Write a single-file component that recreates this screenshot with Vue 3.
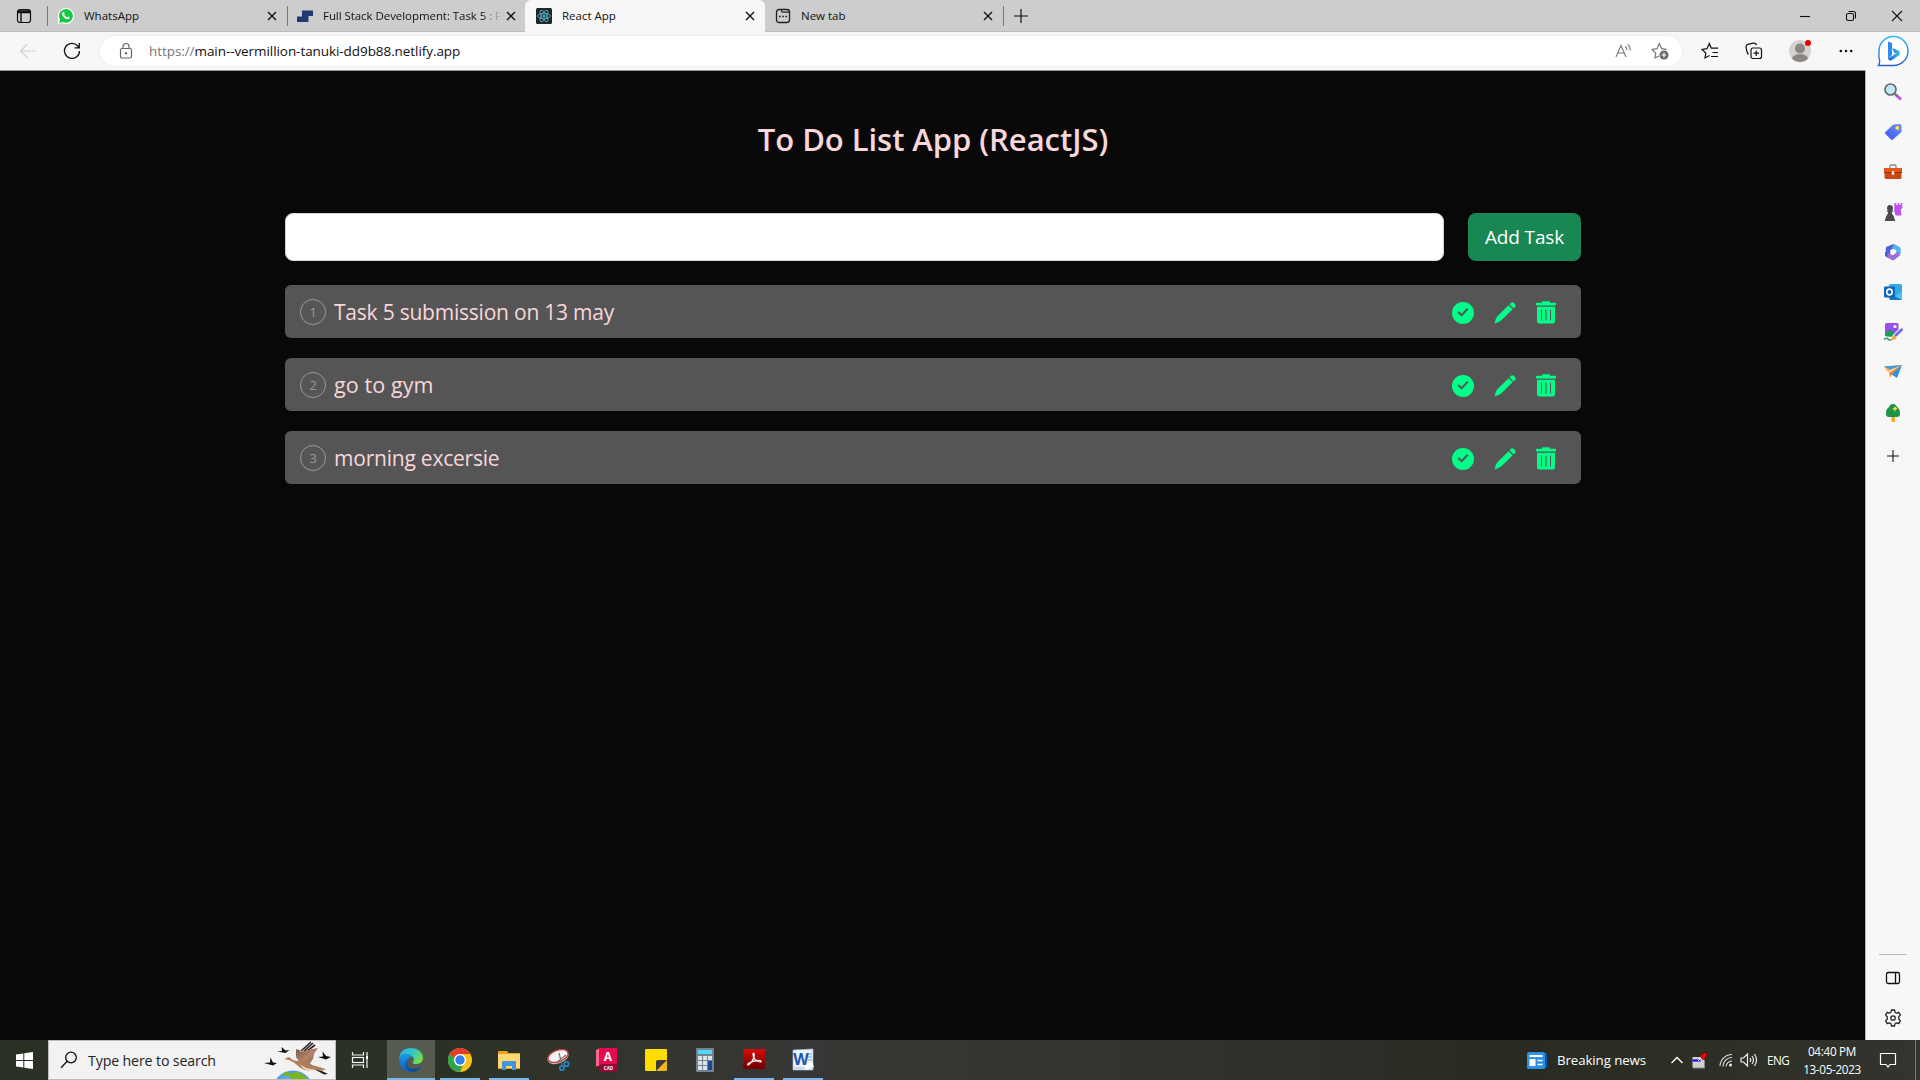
<script setup>
import { ref } from 'vue'
const tasks = ref(['Task 5 submission on 13 may', 'go to gym', 'morning excersie'])
const draft = ref('')
</script>

<template>
  <div class="screen">
    <header class="tabbar">
      <div class="workspace"><svg width="16" height="16" viewBox="0 0 16 16" fill="none" stroke="#111"><rect x="1.5" y="1.5" width="13" height="13" rx="2.5" stroke-width="1.2"/><path d="M2 3h12M5 4.500v10M2 4.500h12" stroke-width="1.4"/></svg></div>
      <div class="tab first">
        <svg class="fav" viewBox="0 0 16 16"><path d="M0 16V8a8 8 0 1 1 8 8 8 8 0 0 1-3.600-.9z" fill="#fff"/><path d="M1 15l1-3.600A6.900 6.900 0 1 1 4.700 14z" fill="#17c643"/><path d="M5 4.300c.5-.5 1-.4 1.200.1l.5 1.200c.1.400-.5.900-.5 1.200.6 1.200 1.500 2 2.800 2.500.4 0 .8-.9 1.200-.8l1.400.7c.5.300-.1 1.900-1.500 2-2.700.1-6.500-3.300-6-5.700.1-.5.500-.9.900-1.200z" fill="#fff"/></svg>
        <span class="t name">WhatsApp</span>
        <svg class="x" viewBox="0 0 10 10"><path d="M1 1l8 8M9 1L1 9"/></svg>
      </div>
      <div class="tab second">
        <svg class="fav" viewBox="0 0 16 16"><path d="M5 2.500h11v5.500h-4.500v6H0V8.500h5z" fill="#233a70"/></svg>
        <span class="t name faded">Full Stack Development: Task 5 : F</span>
        <svg class="x" viewBox="0 0 10 10"><path d="M1 1l8 8M9 1L1 9"/></svg>
      </div>
      <div class="tab active">
        <svg class="fav" viewBox="0 0 16 16"><rect width="16" height="16" rx="1.500" fill="#20232a"/><g fill="none" stroke="#58c4dc" stroke-width=".8"><ellipse cx="8" cy="8" rx="6.500" ry="2.500"/><ellipse cx="8" cy="8" rx="6.500" ry="2.500" transform="rotate(60 8 8)"/><ellipse cx="8" cy="8" rx="6.500" ry="2.500" transform="rotate(120 8 8)"/></g><circle cx="8" cy="8" r="1.200" fill="#58c4dc"/></svg>
        <span class="t name">React App</span>
        <svg class="x" viewBox="0 0 10 10"><path d="M1 1l8 8M9 1L1 9"/></svg>
      </div>
      <div class="tab last">
        <svg class="fav" viewBox="0 0 16 16" fill="none" stroke="#222" stroke-width="1.300"><rect x="1.500" y="1.500" width="13" height="13" rx="2.500"/><path d="M6.500 1.500v1.200q0 1.500 1.500 1.500h6.300"/><path d="M4 8.500h1.600M7.200 8.500h1.600M10.400 8.500h1.600" stroke-width="1.600"/></svg>
        <span class="t name">New tab</span>
        <svg class="x" viewBox="0 0 10 10"><path d="M1 1l8 8M9 1L1 9"/></svg>
      </div>
      <svg class="plus" width="14" height="14" viewBox="0 0 14 14"><path d="M7 0v14M0 7h14" stroke="#111" stroke-width="1.200"/></svg>
      <div class="winctl">
        <svg width="12" height="12" viewBox="0 0 12 12"><path d="M1 6.500h10" /></svg>
        <svg width="12" height="12" viewBox="0 0 12 12"><rect x="1.500" y="3.500" width="7" height="7" rx="1.500"/><path d="M3.500 1.500h5q2 0 2 2v5"/></svg>
        <svg width="12" height="12" viewBox="0 0 12 12"><path d="M1 1l10 10M11 1L1 11"/></svg>
      </div>
    </header>

    <div class="toolbar">
      <svg class="back" width="18" height="18" viewBox="0 0 18 18" fill="none" stroke="#cfcfcf" stroke-width="1.100"><path d="M17 9H1.500M8.500 2l-7 7 7 7"/></svg>
      <svg class="reload" width="18" height="18" viewBox="0 0 18 18" fill="none" stroke="#111" stroke-width="1.300"><path d="M16.500 9A7.500 7.500 0 1 1 14.500 3.800L16 5.500M16.300 1v4.800h-4.800"/></svg>
      <div class="address">
        <svg class="lock" width="14" height="18" viewBox="0 0 14 18" fill="none" stroke="#666" stroke-width="1.200"><rect x="1.500" y="6.500" width="11" height="9.500" rx="1.800"/><path d="M4 6.500V4.500a3 3 0 0 1 6 0v2"/><circle cx="7" cy="11.300" r=".6" fill="#666"/></svg>
        <span class="t url"><i>https://</i>main--vermillion-tanuki-dd9b88.netlify.app</span>
        <svg class="aloud" width="17" height="16" viewBox="0 0 17 16" fill="none" stroke="#777" stroke-width="1.100"><path d="M1 14L6 2.500 11 14M2.800 10h6.400M10 3.500q2 1 2 3.500M12.500 1.500q3 2 2.700 6"/></svg>
        <svg class="star" width="18" height="18" viewBox="0 0 18 18" fill="none" stroke="#777" stroke-width="1.200"><path d="M8 14L4 16l.7-5L1 7.400l5-.7L8.300 1.500l2.300 5.200 5 .7"/><circle cx="13" cy="13" r="4.500" fill="#666" stroke="none"/><path d="M13 10.500v5M10.500 13h5" stroke="#fff"/></svg>
      </div>
      <div class="actions">
        <svg width="18" height="18" viewBox="0 0 18 18" fill="none" stroke="#111" stroke-width="1.200"><path d="M8.500 13.500L4 16l.8-5L1 7.400l5-.7L8.300 1.500l2 4.700h6.700M11.500 10.500H17M10 14.500h7"/></svg>
        <svg width="18" height="18" viewBox="0 0 18 18" fill="none" stroke="#111" stroke-width="1.200"><rect x="6" y="6" width="10.500" height="10.500" rx="2"/><path d="M11.200 8.500v5.500M8.500 11.200h5.500M3.500 12.500Q2.500 11.500 2 9.500L1 5.500Q.8 3 3 2.300L8 1.100q2.500-.4 3.700 2"/></svg>
        <svg width="24" height="24" viewBox="0 0 24 24"><clipPath id="av"><circle cx="12" cy="12" r="11"/></clipPath><circle cx="12" cy="12" r="11" fill="#d5d3d0"/><g clip-path="url(#av)" fill="#8b8784"><circle cx="12" cy="9.500" r="5"/><ellipse cx="12" cy="20" rx="8" ry="5"/></g><circle cx="20" cy="4" r="3" fill="#e60000"/></svg>
        <svg width="14" height="4" viewBox="0 0 14 4" fill="#111"><circle cx="1.800" cy="2" r="1.300"/><circle cx="7" cy="2" r="1.300"/><circle cx="12.200" cy="2" r="1.300"/></svg>
        <svg width="32" height="32" viewBox="0 0 32 32"><defs><linearGradient id="bo" x1="0" y1="0" x2="0" y2="1"><stop stop-color="#2bb8f4"/><stop offset="1" stop-color="#2560d8"/></linearGradient><linearGradient id="bi" x1="0" y1="0" x2="1" y2="0"><stop stop-color="#1c55d8"/><stop offset="1" stop-color="#38c8f0"/></linearGradient></defs><path d="M1.500 30.500q2-3 .5-8V16a14.500 14.500 0 1 1 14.500 14.500z" fill="#fff" stroke="url(#bo)" stroke-width="1.400"/><path d="M11 6.500l4 1.500v12l-4 3.500z" fill="#2a8cf2"/><path d="M11 23.500l8-5-2-1-1.800-4.500 6.300 2.500q3 2.500.3 5L15 25q-3 1.500-4-1.500z" fill="url(#bi)"/></svg>
      </div>
    </div>

    <div class="middle">
      <main class="page">
        <h1><span class="t">To Do List App (ReactJS)</span></h1>
        <div class="entry">
          <input v-model="draft" type="text">
          <button type="button"><span class="t">Add Task</span></button>
        </div>
        <div v-for="(task, i) in tasks" :key="task" class="row">
          <span class="num">{{ i + 1 }}</span>
          <span class="t task">{{ task }}</span>
          <div class="ops">
            <svg width="22" height="22" viewBox="0 0 16 16" fill="#0f8"><path d="M16 8A8 8 0 1 1 0 8a8 8 0 0 1 16 0m-4.500-2.200a.7.7 0 0 0-1-1L7 8.600 5.400 7.100a.7.7 0 0 0-1 1l2.100 2.100a.7.7 0 0 0 1 0z"/></svg>
            <svg width="22" height="22" viewBox="0 0 23 23" fill="#0f8"><path d="M16.200 2.300l1.600-1.600q1.600-1.200 3.600.8t.8 3.600l-1.800 1.700zM15.200 3.300l4.300 4.400L7.800 19.200Q5.500 21.300.6 22.400 1.400 17.400 3.500 15z"/></svg>
            <svg width="20" height="23" viewBox="0 0 20 23"><path d="M6 2V1q0-.8 1-.8h6q1 0 1 .8v1z" fill="#0f8"/><rect y="1.700" width="20" height="2.900" rx="1" fill="#0f8"/><path d="M1 5.800h18V20q0 2.500-2.500 2.500h-13Q1 22.500 1 20z" fill="#0f8"/><path d="M5.500 8.700v10.800M10 8.700v10.800M14.500 8.700v10.800" stroke="#555" stroke-width="1"/></svg>
          </div>
        </div>
      </main>
      <aside class="side">
        <svg viewBox="0 0 20 20"><path d="M12.500 12.500l5.500 5" stroke="#c44ef0" stroke-width="3"/><path d="M11 11l3 3" stroke="#777" stroke-width="2"/><circle cx="7.500" cy="7.500" r="5.500" fill="#bfe6fb" stroke="#666" stroke-width="1.600"/></svg>
        <svg viewBox="0 0 20 20"><defs><linearGradient id="tg" x1="0" y1="1" x2="1" y2="0"><stop stop-color="#3657f0"/><stop offset="1" stop-color="#6d92ff"/></linearGradient></defs><path d="M10.500 2.500l6-.5q2 0 2 2v6L10 17.500q-1 .8-2 0L2.500 12q-1-1-.2-2z" fill="url(#tg)"/><circle cx="14.300" cy="6" r="1.500" fill="#fff" stroke="#f7c52b" stroke-width="1.300"/></svg>
        <svg viewBox="0 0 20 20"><path d="M7 6V4q0-1 1-1h4q1 0 1 1v2" fill="none" stroke="#888" stroke-width="1.300"/><rect x="1.500" y="6" width="17" height="11" rx="1.500" fill="#c94a15"/><path d="M1 6h18v4H1z" fill="#e2571c"/><path d="M1 10h18v1H1z" fill="#96330d"/><rect x="8.700" y="9" width="2.600" height="4" rx="1" fill="#ddd"/></svg>
        <svg viewBox="0 0 20 20"><path d="M11.500 1h1.800v2h1.400V1h1.800v2h1.300V1h1.500v5l-1.500 1.500.8 6h-6l-1.500-5z" fill="#bd52f2"/><path d="M7 3a3 3 0 0 1 2 5.300h1v1.400H8.700q0 3 2.300 4.800v2h.9V19H2v-2.500h.9v-2q2.300-1.800 2.300-4.800H4V8.300h1A3 3 0 0 1 7 3z" fill="#4b4b4b"/></svg>
        <svg viewBox="0 0 20 20" fill="none" stroke-width="4.500" stroke-linejoin="round"><path d="M11.500 4L5 6.500v6" stroke="#4a62d8"/><path d="M10 4l5.500 3v5" stroke="#58b4ea"/><path d="M16 11.500l-6 4.500-5.500-3" stroke="#9a6fd6"/><path d="M3 10.500v2.500l1.500 1.500" stroke="#3f57c8" stroke-width="2"/></svg>
        <svg viewBox="0 0 20 20"><rect x="6" y="2" width="13" height="16" rx="1.500" fill="#33a9e8"/><path d="M6 11l13 7H7.500z" fill="#1672c4"/><path d="M19 10l-8 4 8 4z" fill="#46c5f2"/><rect x="1" y="4.500" width="11" height="11" rx="1" fill="#0b67b8"/><ellipse cx="6.500" cy="10" rx="2.700" ry="2.900" fill="none" stroke="#fff" stroke-width="1.600"/></svg>
        <svg viewBox="0 0 20 20"><rect x="2" y="1" width="13.500" height="13" rx="1.500" fill="#9a4ef0"/><path d="M2 12.500Q8 3 13 13.500q-5 2-11 .5z" fill="#1f9a5d"/><circle cx="12" cy="4.500" r="1.600" fill="#fff"/><path d="M1 17.500q3-2.500 4-.5t4 .5" fill="none" stroke="#238653" stroke-width="1.300"/><path d="M11 15l8.500-8" stroke="#f7f7f7" stroke-width="4.500"/><path d="M12 14l7.500-7" stroke="#6d62f5" stroke-width="2.600"/><path d="M8.500 18q0-4 3-4.500l2 2q-1 3-5 2.500z" fill="#f9a825"/></svg>
        <svg viewBox="0 0 20 20"><path d="M1 4.500L19 3 5 10z" fill="#ffb33b"/><path d="M1 4.500L19 3 7 7.500z" fill="#349ceb"/><path d="M19 3l-5 13-8-5z" fill="#2d90e8"/><path d="M6 11L19 3 8.500 12.500 7.500 16z" fill="#f58b1b"/></svg>
        <svg viewBox="0 0 20 20"><rect x="8.500" y="12" width="3.500" height="7" rx="1" fill="#f5a623"/><path d="M10 1q3 0 4 3 3 2 3 6 .3 4-3 4H6q-3.300 0-3-4 0-4 3-6 1-3 4-3z" fill="#1e9448"/><path d="M12 3l1 1.700 1.700 1-1.700 1-1 1.700-1-1.700-1.700-1 1.700-1z" fill="#ffd23c"/></svg>
        <svg class="add" viewBox="0 0 20 20"><path d="M10 4v12M4 10h12" stroke="#111" stroke-width="1.100"/></svg>
        <hr>
        <svg class="panel" viewBox="0 0 20 20" fill="none" stroke="#111" stroke-width="1.300"><rect x="3.500" y="4.500" width="13" height="11" rx="1.800"/><path d="M12.500 4.500v11"/></svg>
        <svg class="gear" viewBox="0 0 20 20" fill="none" stroke="#222" stroke-width="1.300"><path d="M8.500 2h3l.5 2.200 1.700 1 2.100-.8 1.600 2.700-1.600 1.700v2.400l1.600 1.700-1.600 2.700-2.100-.8-1.700 1-.5 2.200h-3L8 15.800l-1.700-1-2.100.8-1.600-2.700 1.600-1.700V8.800L2.600 7.100l1.600-2.700 2.100.8 1.700-1z" stroke-linejoin="round"/><circle cx="10" cy="10" r="2.200"/></svg>
      </aside>
    </div>

    <footer class="taskbar">
      <div class="start"><svg width="17" height="17" viewBox="0 0 17 17" fill="#fff"><path d="M0 2.400l7.300-1V8H0zM8.300 1.200L17 0v8H8.300zM0 9h7.300v6.600L0 14.600zM8.300 9H17v8l-8.700-1.200z"/></svg></div>
      <div class="search">
        <svg class="mag" width="18" height="18" viewBox="0 0 18 18" fill="none" stroke="#111" stroke-width="1.300"><circle cx="11" cy="6.500" r="5.300"/><path d="M7.200 10.300L1 16.700"/></svg>
        <span class="t stext">Type here to search</span>
        <svg class="goose" width="70" height="38" viewBox="0 0 70 38">
          <defs><linearGradient id="gb" x1="0" y1="0" x2="1" y2="1"><stop stop-color="#7d5748"/><stop offset=".5" stop-color="#b38468"/><stop offset="1" stop-color="#7a5140"/></linearGradient><radialGradient id="gl"><stop stop-color="#9fd8f5"/><stop offset="1" stop-color="#4a9ae6"/></radialGradient></defs>
          <circle cx="29" cy="50" r="20.500" fill="url(#gl)"/><path d="M20 32q2-2 5-1 1 2 3 2 1-2 4-2 7 1 12 7H27q-1-4-7-3z" fill="#7ab51f"/>
          <path d="M37 10L47 1M40 10l9-8M43 10l8-6M34 9l3 4" stroke="#2b211f" stroke-width="1.600" fill="none"/>
          <path d="M32 8l5 3 6-2 11-2-4 6-1 5-6 8-7-4-4-6z" fill="url(#gb)"/>
          <path d="M21 18q2-2.500 5-1.500 2 3 7 3.500 9-1 15 4l9 2.500 5 2-4 1-7-1q-9 3-15-2l-6-5-5-2.500z" fill="#b07d5c"/>
          <path d="M36 23q6 6 15 5l-2 1.500q-9 2-13-6.500z" fill="#ead8c4"/>
          <path d="M50 28l8 2 6 3-4 .5z" fill="#2b211f"/><path d="M20.500 18.500l3.500-2v2z" fill="#e7862e"/>
          <path d="M0 22l6-.5.500-5 2.500 5 4 .5-4 2.500zM13 10.500l5-.5-.5-4 4 3.500 4-.5-4 3zM54 16l5-.5-.5-5 3.500 4.500 5 1-5 2.500z" fill="#111"/>
        </svg>
      </div>
      <div class="taskview"><svg width="18" height="18" viewBox="0 0 18 18" fill="none" stroke="#f5f5f5" stroke-width="1.200"><path d="M1.500 1v3h11V1M1.500 17v-3h11v3"/><rect x="1.500" y="6.500" width="11" height="5"/><path d="M16 1v16"/><rect x="15" y="5" width="2" height="3" fill="#fff" stroke="none"/></svg></div>
      <div class="apps">
        <div class="app on"><svg width="24" height="24" viewBox="0 0 24 24"><defs><linearGradient id="e1" x1="0" y1="0" x2="1" y2=".6"><stop stop-color="#2db0e8"/><stop offset=".5" stop-color="#35c3c8"/><stop offset="1" stop-color="#6fe04d"/></linearGradient><linearGradient id="e2" x1="0" y1="0" x2="0" y2="1"><stop stop-color="#1a9be0"/><stop offset="1" stop-color="#0b5fbe"/></linearGradient></defs><path d="M0 11Q1 0 12 0q11 .5 12 9.500 0 6-6.500 6.500-4 .2-3.800-1.500 2-2 .6-5Q11 5.500 6 6.500 2 7.500 0 11z" fill="url(#e1)"/><path d="M0 12q0-6 6.500-6.200Q13 6 14.300 9.500 8.500 8.500 8 14q0 6 6 8.500l-2 1.500Q1 23 0 12z" fill="url(#e2)"/><path d="M9 10.500q-4 9 5 10.500 5 .5 8.500-3-2 5.500-8.500 6Q6 23 6.500 15 7 12 9 10.500z" fill="#0c4f9c"/></svg></div>
        <div class="app run"><svg width="24" height="24" viewBox="0 0 24 24"><circle cx="12" cy="12" r="12" fill="#fbc116"/><path d="M1.600 6L6.800 15a6 6 0 0 0 5.200 3h2.600L12 24A12 12 0 0 1 1.600 6z" fill="#2da44e"/><path d="M1.600 6l5.200 9L9 12 7 9z" fill="#2da44e"/><path d="M1.600 6A12 12 0 0 1 22.400 6H12Q8 6 6.500 9.700z" fill="#e33b2e"/><circle cx="12" cy="12" r="6" fill="#fff"/><circle cx="12" cy="12" r="4.700" fill="#317ef0"/></svg></div>
        <div class="app run"><svg width="24" height="24" viewBox="0 0 24 24"><path d="M1 3h9l1.500 2H23v16H1z" fill="#e6a519"/><path d="M1 6h22v14H1z" fill="#ffd874"/><path d="M5 14q0-1 1-1h12q1 0 1 1v8h-4v-4H9v4H5z" fill="#3f96d8"/></svg></div>
        <div class="app"><svg width="24" height="24" viewBox="0 0 24 24"><ellipse cx="12" cy="9" rx="11" ry="6.500" transform="rotate(-20 12 9)" fill="#b9bbbd"/><ellipse cx="12" cy="8" rx="10.500" ry="5.700" transform="rotate(-20 12 8)" fill="#f4f4f4" stroke="#d13a3a" stroke-width="1.300"/><path d="M13 5l3 12M20 7l-9 7" stroke="#777" stroke-width="1.200"/><g fill="none" stroke="#2584c6" stroke-width="1.800"><circle cx="16" cy="20" r="2.200"/><circle cx="20.500" cy="16" r="2.200"/></g></svg></div>
        <div class="app"><svg width="24" height="24" viewBox="0 0 24 24"><path d="M1 2l4-2v17l-4 2z" fill="#f56a8c"/><rect x="4" width="18" height="18" fill="#e5094d"/><path d="M1 18h3l2-2h17v8H6z" fill="#8e0b36"/><text x="13" y="13" text-anchor="middle" font-size="12" font-weight="700" fill="#fff">A</text><text x="13.500" y="22" text-anchor="middle" font-size="4.500" font-weight="700" fill="#fff">CAD</text></svg></div>
        <div class="app"><svg width="24" height="24" viewBox="0 0 24 24"><path d="M1 2q0-1 1-1h20q1 0 1 1v10L12 23H2q-1 0-1-1z" fill="#ffdd00"/><path d="M12 23V12h11v10q0 1-1 1z" fill="#f3b51a"/><path d="M12 23v-9q0-2 2-2h9z" fill="#3b3b38"/></svg></div>
        <div class="app"><svg width="24" height="24" viewBox="0 0 24 24"><rect x="3" width="18" height="24" rx="1" fill="#75838f"/><rect x="5" y="2" width="14" height="4" fill="#50dcf8"/><g fill="#dfe4e8"><rect x="5" y="8" width="4" height="4"/><rect x="10" y="8" width="4" height="4"/><rect x="15" y="8" width="4" height="4"/><rect x="5" y="13" width="4" height="4"/><rect x="10" y="13" width="4" height="4"/><rect x="5" y="18" width="4" height="4"/><rect x="10" y="18" width="4" height="4"/></g><rect x="15" y="13" width="4" height="9" fill="#124d91"/></svg></div>
        <div class="app run"><svg width="24" height="24" viewBox="0 0 24 24"><defs><linearGradient id="ac" x1="0" y1="0" x2="0" y2="1"><stop stop-color="#d60b0b"/><stop offset="1" stop-color="#6d0000"/></linearGradient></defs><rect x="1" y="1" width="22" height="20" fill="url(#ac)"/><path d="M6 17q4-2 6-8 .5-4-.5-4t0 4q2 4.500 7 5 1.500-.5-.5-1.500-5-.5-11 2.500-2 1.500-1 2z" fill="none" stroke="#fff" stroke-width="1.200"/></svg></div>
        <div class="app run"><svg width="24" height="24" viewBox="0 0 24 24"><path d="M2 2l20-1v21H2z" fill="#eef3fa" stroke="#9fb9de" stroke-width=".7"/><path d="M2 19h20v3H2z" fill="#c9d8ee"/><path d="M16 6h5M16 9h5M17 12h4" stroke="#7fa3d4"/><path d="M13 17l8-3 2 5-8 3z" fill="#fff"/><text x="10" y="16.500" text-anchor="middle" font-size="16" font-weight="700" fill="#2057a8">W</text></svg></div>
      </div>
      <div class="tray">
        <svg class="news" width="20" height="17" viewBox="0 0 20 17"><rect x="2" y="1" width="18" height="15" rx="1.500" fill="#0d5aa7"/><rect width="18" height="17" rx="1.500" fill="#2a8fe6"/><path d="M2.500 4h13" stroke="#fff" stroke-width="2.200"/><path d="M2.500 7h6v7h-6z" fill="#fff"/><path d="M10.500 8.500h5M10.500 12.500h5" stroke="#fff" stroke-width="1.700"/></svg>
        <span class="t newst">Breaking news</span>
        <svg class="chev" width="12" height="8" viewBox="0 0 12 8" fill="none" stroke="#fff" stroke-width="1.300"><path d="M.5 7L6 1.500 11.500 7"/></svg>
        <svg class="pin" width="16" height="17" viewBox="0 0 16 17"><path d="M1 5h12v11.500H1z" fill="#888"/><path d="M.5 5H12v10.500H.5z" fill="#cfcfcf"/><path d="M.5 7.500h8v2h-8z" fill="#00f"/><path d="M6 9l3-3" stroke="#fff"/><path d="M8 3l2.500-.5L11.500.5h3L15 3l-2 2.500L12.500 8 10 7z" fill="#f00" stroke="#300" stroke-width=".5"/></svg>
        <svg class="wifi" width="14" height="14" viewBox="0 0 14 14" fill="none" stroke="#ddd" stroke-width="1.100"><path d="M1 13A12 12 0 0 1 13 1.500"/><path d="M4 13.500A9 9 0 0 1 13 4.500"/><path d="M7 13.500a6.500 6.500 0 0 1 6-5.500"/><circle cx="11.500" cy="12" r="1.500" fill="#eee" stroke="none"/></svg>
        <svg class="vol" width="18" height="14" viewBox="0 0 18 14" fill="none" stroke="#eee" stroke-width="1.200"><path d="M1 5h2.500L7.500 1v12l-4-4H1zM10 5q1.500 2 0 4M12 3q3 4 0 8M14.500 1q4 6 0 12"/></svg>
        <span class="t eng">ENG</span>
        <div class="clock"><span class="t time">04:40 PM</span><span class="t date">13-05-2023</span></div>
        <svg class="note" width="18" height="17" viewBox="0 0 18 17" fill="none" stroke="#fff" stroke-width="1.200"><path d="M1.500 1.500h15v11H11l-2 2.500-2-2.500H1.500z"/></svg>
        <i class="peek"></i>
      </div>
    </footer>
  </div>
</template>

<style>
html, body { margin: 0; overflow: hidden; }
</style>

<style scoped>
.screen { width: 1920px; height: 1080px; display: flex; flex-direction: column; font-family: "Open Sans", "Noto Sans", sans-serif; overflow: hidden; background: #f7f7f7; }
svg { display: block; flex: none; }
.t { white-space: nowrap; }
.tabbar { height: 32px; flex: none; display: flex; align-items: center; background: #cdcdcd; box-shadow: inset 0 -1px #bdbdbd; }
.workspace { width: 47px; padding-left: 16px; box-sizing: border-box; }
.tab { height: 32px; display: flex; align-items: center; box-sizing: border-box; position: relative; font-size: 11.5px; color: #111; }
.tab.first { width: 240px; padding: 0 10px 0 11px; }
.tab.first::before, .tab.second::before, .tab.last::after { content: ""; position: absolute; left: 0; top: 6px; width: 1px; height: 20px; background: #777; }
.tab.last::after { left: auto; right: 0; }
.tab.second { width: 238px; padding: 0 9px 0 10px; }
.tab.active { width: 240px; padding: 0 10px 0 11px; background: #f7f7f7; border-radius: 6px 6px 0 0; }
.tab.last { width: 239px; padding: 0 11px 0 10px; }
.fav { width: 16px; height: 16px; margin-right: 10px; }
.name { flex: 1; line-height: 18px; }
.faded { letter-spacing: -.06px; -webkit-mask-image: linear-gradient(90deg, #000 160px, transparent 178px); mask-image: linear-gradient(90deg, #000 160px, transparent 178px); }
.x { width: 10px; height: 10px; stroke: #111; stroke-width: 1.4; }
.plus { margin-left: 10px; }
.winctl { margin-left: auto; margin-right: 17px; display: flex; gap: 34px; }
.winctl svg { fill: none; stroke: #111; stroke-width: 1.1; }
.toolbar { height: 38px; flex: none; display: flex; align-items: center; background: #f7f7f7; }
.back { margin-left: 19px; }
.reload { margin-left: 26px; }
.address { margin-left: 19px; width: 1582px; height: 30px; box-sizing: border-box; border-radius: 15px; background: #fff; box-shadow: 0 0 2px #ddd; display: flex; align-items: center; padding: 0 13px 0 19px; }
.url { margin-left: 16px; font-size: 13.5px; letter-spacing: -.07px; color: #111; flex: 1; line-height: 20px; }
.url i { font-style: normal; color: #777; }
.star { margin-left: 19px; }
.actions { flex: 1; display: flex; align-items: center; }
.actions svg:nth-child(1) { margin-left: 19px; }
.actions svg:nth-child(2) { margin-left: 26px; }
.actions svg:nth-child(3) { margin-left: 25px; }
.actions svg:nth-child(4) { margin-left: 27px; }
.actions svg:nth-child(5) { margin-left: 24px; }
.middle { flex: 1; min-height: 0; display: flex; }
.page { width: 1865px; box-sizing: border-box; border-top: 1px solid #999; background: #080808; padding: 44px 284px 0 285px; color: #f8d7da; }
h1 { margin: 0; height: 48px; line-height: 48px; font-size: 31px; font-weight: 600; letter-spacing: -.05px; text-align: center; }
.entry { display: flex; gap: 24px; margin-top: 50px; }
.entry input { width: 1159px; height: 48px; box-sizing: border-box; border: 1px solid #ced4da; border-radius: 8px; background: #fff; padding: 0 16px; font: 20px "Open Sans", sans-serif; outline: none; }
.entry button { width: 113px; height: 48px; border: 0; border-radius: 8px; background: #198754; color: #fff; font-family: inherit; font-size: 19px; letter-spacing: -.15px; padding: 0; }
.row { height: 53px; margin-top: 20px; border-radius: 6px; background: #555; display: flex; align-items: center; box-sizing: border-box; padding: 0 25px 0 15px; }
.entry + .row { margin-top: 24px; }
.num { width: 26px; height: 26px; box-sizing: border-box; border: 1px solid #999; border-radius: 50%; text-align: center; font-size: 13.5px; line-height: 25px; color: #999; }
.task { margin-left: 8px; font-size: 21px; line-height: 30px; letter-spacing: -.22px; }
.row:nth-child(4) .task { font-size: 21.5px; letter-spacing: .1px; }
.ops { margin-left: auto; display: flex; align-items: center; gap: 20px; padding-top: 2px; }
.side { flex: 1; background: #f7f7f7; border-left: 1px solid #bbb; display: flex; flex-direction: column; align-items: center; padding-top: 11.5px; box-sizing: border-box; }
.side svg { width: 20px; height: 20px; margin-bottom: 20.15px; }
.side svg.add { margin-top: 3px; }
.side hr { width: 28px; height: 1px; margin: auto 0 13px; border: 0; background: #bbb; }
.side svg.panel { margin-bottom: 20px; }
.side svg.gear { margin-bottom: 12px; }
.taskbar { height: 40px; flex: none; display: flex; color: #fff; background: linear-gradient(90deg, #2b3024 0, #2c3125 440px, #373735 800px, #32332e 1150px, #282b22 1500px, #33342d 1920px); }
.start { width: 48px; display: flex; align-items: center; padding-left: 16px; box-sizing: border-box; }
.search { width: 288px; box-sizing: border-box; background: #f2f2f2; border: 1px solid #bbb; display: flex; align-items: center; padding-left: 11px; position: relative; }
.stext { margin-left: 10px; font-size: 14.2px; letter-spacing: -.14px; color: #222; }
.goose { position: absolute; right: 1px; top: 0; }
.taskview { width: 51px; display: flex; align-items: center; padding-left: 15px; box-sizing: border-box; }
.apps { display: flex; gap: 9px; }
.app { width: 40px; height: 40px; display: flex; align-items: center; justify-content: center; box-sizing: border-box; }
.app.on { width: 48px; background: #565b50; border-bottom: 2px solid #76b9ed; padding-top: 2px; margin-right: -4px; }
.app.run { border-bottom: 2px solid #76b9ed; padding-top: 2px; }
.tray { margin-left: auto; width: 393px; display: flex; align-items: center; font-size: 11.7px; }
.newst { margin-left: 10px; width: 90px; font-size: 13.3px; letter-spacing: -.1px; }
.chev { margin-left: 24px; }
.pin { margin-left: 9px; }
.wifi { margin-left: 11px; }
.vol { margin-left: 7px; }
.eng { margin-left: 9px; width: 24px; letter-spacing: -.5px; }
.clock { width: 82px; display: flex; flex-direction: column; align-items: center; line-height: 18px; }
.time { letter-spacing: -.27px; }
.date { letter-spacing: -.33px; }
.note { margin-left: 6px; }
.peek { margin-left: auto; margin-right: 4px; width: 1px; height: 40px; background: #777; }
</style>
